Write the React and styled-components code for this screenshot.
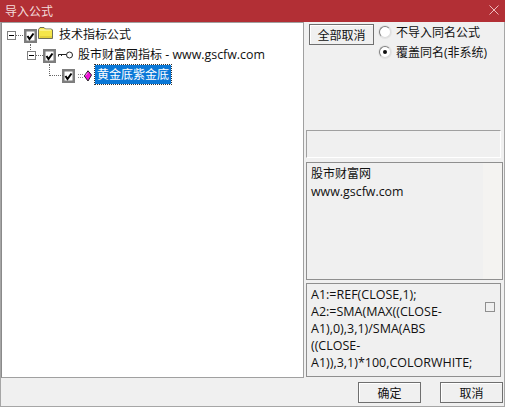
import React from 'react';
import styled, { createGlobalStyle } from 'styled-components';

const GlobalStyle = createGlobalStyle`
  html, body { margin: 0; padding: 0; background: #f0f0f0; }
  body { font-family: "Open Sans", "Noto Sans CJK SC", sans-serif; font-size: 12px; color: #111; }
`;

const Window = styled.div`
  width: 505px;
  height: 407px;
  display: flex;
  flex-direction: column;
  background: #f0f0f0;
  overflow: hidden;
`;
const TitleBar = styled.div`
  height: 22px;
  flex: none;
  background: #b22f35;
  color: #f3dcdc;
  display: flex;
  align-items: center;
  justify-content: space-between;
  padding: 0 6px 0 5px;
  font-size: 12px;
`;
const CloseIcon = styled.svg`
  display: block;
  margin-bottom: 2px;
`;
const Frame = styled.div`
  flex: 1;
  min-height: 0;
  display: flex;
  flex-direction: column;
  border: 1px solid #a6a6a6;
  border-top: 0;
`;
const Body = styled.div`
  height: 356px;
  flex: none;
  display: flex;
`;
const TreePane = styled.div`
  width: 303px;
  flex: none;
  box-sizing: border-box;
  background: #fff;
  border: 1px solid #a0a0a0;
  border-left-color: #8a8a8a;
  padding-top: 2px;
`;
const TreeRow = styled.div`
  position: relative;
  height: 20px;
  display: flex;
  align-items: center;
  padding-left: ${p => p.$indent}px;
`;
/* dotted stub that ties a row to the checkbox of its parent */
const Stem = styled.span`
  position: absolute;
  left: ${p => p.$x}px;
  top: ${p => p.$top}px;
  width: ${p => p.$w}px;
  height: ${p => p.$h}px;
  border-left: 1px dotted #666;
  border-bottom: ${p => (p.$w ? '1px dotted #666' : '0')};
`;
const TreeGlyph = styled.svg`
  display: block;
  flex: none;
  margin-left: ${p => p.$ml || 0}px;
  margin-top: ${p => p.$mt || 0}px;
`;
const RowLabel = styled.span`
  margin-left: ${p => p.$gap}px;
  margin-top: -2px;
  white-space: nowrap;
  font-size: 12px;
  line-height: 15px;
`;
const SelectedLabel = styled(RowLabel)`
  margin-top: -2px;
  line-height: 19px;
  height: 19px;
  padding: 0 2px;
  background: #0a78d7;
  color: #fff;
  outline: 1px dotted #333;
  outline-offset: 0;
`;
const Latin = styled.span`
  font-size: 12.4px;
`;
const SidePane = styled.div`
  flex: 1;
  min-width: 0;
  display: flex;
  flex-direction: column;
  padding-left: 2px;
`;
const Options = styled.div`
  height: 108px;
  flex: none;
  display: flex;
  gap: 5px;
  padding: 1px 0 0 3px;
  box-sizing: border-box;
`;
const FlatButton = styled.button`
  width: ${p => p.$w}px;
  height: 21px;
  padding: 0;
  flex: none;
  background: #f0f0f0;
  border: 1px solid #6f6f6f;
  box-shadow: inset 1px 1px 0 #fff;
  font: inherit;
  font-size: 12px;
  color: #111;
`;
const OptionButton = styled(FlatButton)`
  margin-top: 1px;
`;
const RadioGroup = styled.div`
  display: flex;
  flex-direction: column;
  gap: 2px;
`;
const RadioRow = styled.div`
  height: 18px;
  display: flex;
  align-items: center;
  gap: 5px;
  white-space: nowrap;
`;
const Radio = styled.span`
  width: 12px;
  height: 12px;
  box-sizing: border-box;
  border-radius: 50%;
  background: #fff;
  border: 1px solid #808080;
  border-right-color: #dcdcdc;
  border-bottom-color: #dcdcdc;
  box-shadow: 0 0 0 1px #e4e4e4;
  display: flex;
  align-items: center;
  justify-content: center;
  &::after {
    content: "";
    display: ${p => (p.$on ? 'block' : 'none')};
    width: 4px;
    height: 4px;
    border-radius: 50%;
    background: #111;
  }
`;
const StatusBox = styled.div`
  height: 28px;
  width: 195px;
  flex: none;
  box-sizing: border-box;
  border: 1px solid #a0a0a0;
  border-right-color: #fff;
  border-bottom-color: #fff;
`;
const InfoBox = styled.div`
  height: 118px;
  width: 197px;
  flex: none;
  margin-top: 4px;
  box-sizing: border-box;
  border: 1px solid #8f8f8f;
  padding: 2px 4px;
  line-height: 18px;
  background: linear-gradient(to right, #f0f0f0 176px, #f4f3f1 176px);
`;
const CodeBox = styled.div`
  height: 94px;
  width: 195px;
  flex: none;
  margin-top: 3px;
  box-sizing: border-box;
  border: 1px solid #8f8f8f;
  padding: 2px 5px 0 4px;
  font-size: 12.5px;
  line-height: 17px;
  display: flex;
  justify-content: space-between;
`;
const CodeText = styled.div`
  width: 170px;
  white-space: nowrap;
`;
const ScrollMark = styled.span`
  width: 10px;
  height: 10px;
  box-sizing: border-box;
  margin-top: 16px;
  flex: none;
  border: 1px solid #8f8f8f;
`;
const Footer = styled.div`
  flex: 1;
  display: flex;
  justify-content: flex-end;
  gap: 19px;
  padding: 4px 1px 0 0;
`;

const Box = () => (
  <TreeGlyph $mt={2} width="13" height="14" viewBox="0 0 13 14">
    <rect x="1.25" y="1.25" width="10.5" height="11.5" fill="#fff" stroke="#7d7d7d" strokeWidth="2.5" />
    <path d="M3.5 7 L5.5 10 L9.5 4.5" fill="none" stroke="#000" strokeWidth="2" />
  </TreeGlyph>
);
const Expander = () => (
  <TreeGlyph width="9" height="9" viewBox="0 0 9 9">
    <rect x="0.5" y="0.5" width="8" height="8" fill="#fff" stroke="#808080" />
    <path d="M2 4.5 H7" stroke="#000" />
  </TreeGlyph>
);
const Dots = ({ w }) => (
  <TreeGlyph width={w} height="1" viewBox={`0 0 ${w} 1`}>
    <path d={`M0 .5 H${w}`} stroke="#666" strokeDasharray="1 1" />
  </TreeGlyph>
);
const Folder = () => (
  <TreeGlyph $ml={1} $mt={-5} width="15" height="12" viewBox="0 0 15 12">
    <path d="M0.5 2.5 L2 0.5 H6 L7.5 2 H13.5 L14.5 3 V11.5 H0.5 Z" fill="#f5e64a" stroke="#6f6f5a" />
    <path d="M1.5 3 H13" stroke="#fffbc0" />
    <path d="M2 10 H14" stroke="#d2bc30" />
  </TreeGlyph>
);
const KeyIcon = () => (
  <TreeGlyph $ml={2} $mt={-1} width="15" height="8" viewBox="0 0 15 8">
    <circle cx="11.5" cy="4" r="3" fill="#fff" stroke="#222" />
    <path d="M8 3.5 H0.5 V5.5 M3.5 3.5 V5" fill="none" stroke="#222" />
  </TreeGlyph>
);
const GemIcon = () => (
  <TreeGlyph $ml={3} $mt={1} width="14" height="12" viewBox="0 0 14 12">
    <path d="M0 4.5 H5 M0 7.5 H5" stroke="#888" strokeDasharray="1 1" />
    <path d="M10 0.8 L13.5 5 L10 11 L6.3 6 Z" fill="#f012d8" stroke="#222" />
    <path d="M7.5 5.5 L10 2.5" stroke="#f9a0ee" />
  </TreeGlyph>
);

const App = () => (
  <Window>
    <GlobalStyle />
    <TitleBar>
      <span>导入公式</span>
      <CloseIcon width="10" height="10" viewBox="0 0 10 10">
        <path d="M0.5 0.5 L9.5 9.5 M9.5 0.5 L0.5 9.5" stroke="#eebcbc" />
      </CloseIcon>
    </TitleBar>
    <Frame>
      <Body>
        <TreePane>
          <TreeRow $indent={5}>
            <Expander />
            <Dots w={8} />
            <Box />
            <Folder />
            <RowLabel $gap={6}>技术指标公式</RowLabel>
          </TreeRow>
          <TreeRow $indent={25}>
            <Stem $x={28} $top={-1} $w={0} $h={6} />
            <Expander />
            <Dots w={7} />
            <Box />
            <KeyIcon />
            <RowLabel $gap={5}>股市财富网指标<Latin> - www.gscfw.com</Latin></RowLabel>
          </TreeRow>
          <TreeRow $indent={60}>
            <Stem $x={47} $top={-1} $w={13} $h={11} />
            <Box />
            <GemIcon />
            <SelectedLabel $gap={3}>黄金底紫金底</SelectedLabel>
          </TreeRow>
        </TreePane>
        <SidePane>
          <Options>
            <OptionButton $w={65}>全部取消</OptionButton>
            <RadioGroup>
              <RadioRow><Radio />不导入同名公式</RadioRow>
              <RadioRow><Radio $on />覆盖同名(非系统)</RadioRow>
            </RadioGroup>
          </Options>
          <StatusBox />
          <InfoBox>股市财富网<br /><Latin>www.gscfw.com</Latin></InfoBox>
          <CodeBox>
            <CodeText>A1:=REF(CLOSE,1);<br />A2:=SMA(MAX((CLOSE-<br />A1),0),3,1)/SMA(ABS<br />((CLOSE-<br />A1)),3,1)*100,COLORWHITE;</CodeText>
            <ScrollMark />
          </CodeBox>
        </SidePane>
      </Body>
      <Footer>
        <FlatButton $w={63}>确定</FlatButton>
        <FlatButton $w={63}>取消</FlatButton>
      </Footer>
    </Frame>
  </Window>
);

export default App;
